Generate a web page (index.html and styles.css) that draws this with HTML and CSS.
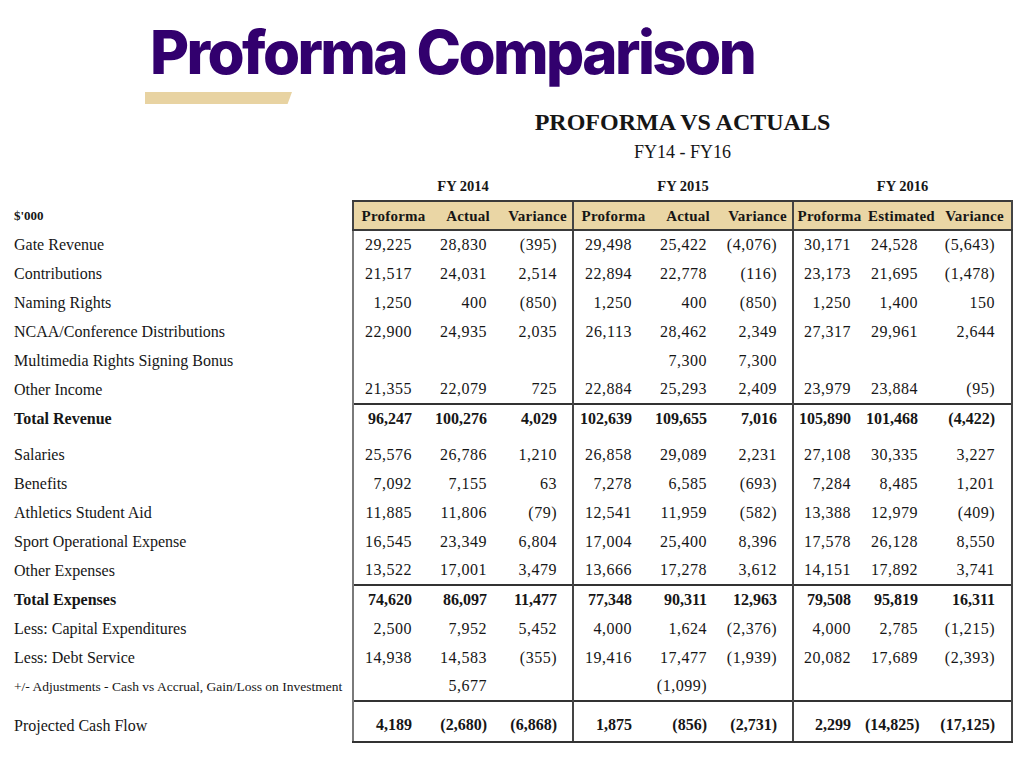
FILE: index.html
```html
<!DOCTYPE html>
<html>
<head>
<meta charset="utf-8">
<link rel="stylesheet" href="styles.css">
</head>
<body>
<header class="page-head">
  <h1 class="title">Proforma Comparison</h1>
  <div class="title-bar"></div>
</header>
<div class="report-head">
  <div class="report-title">PROFORMA VS ACTUALS</div>
  <div class="report-sub">FY14 - FY16</div>
</div>
<table class="fin">
  <colgroup>
    <col class="c-label">
    <col class="c-a"><col class="c-b"><col class="c-b">
    <col class="c-a"><col class="c-b"><col class="c-b">
    <col class="c-e"><col class="c-f"><col class="c-g">
  </colgroup>
  <tr class="years">
    <td></td>
    <td colspan="3">FY 2014</td>
    <td colspan="3">FY 2015</td>
    <td colspan="3">FY 2016</td>
  </tr>
  <tr class="hdr">
    <td class="lbl unit">$'000</td>
    <th class="g">Proforma</th><th>Actual</th><th>Variance</th>
    <th class="g">Proforma</th><th>Actual</th><th>Variance</th>
    <th class="g">Proforma</th><th>Estimated</th><th class="end">Variance</th>
  </tr>
  <tr>
    <td class="lbl">Gate Revenue</td>
    <td class="g">29,225</td><td>28,830</td><td>(395)</td>
    <td class="g">29,498</td><td>25,422</td><td>(4,076)</td>
    <td class="g">30,171</td><td>24,528</td><td class="end">(5,643)</td>
  </tr>
  <tr>
    <td class="lbl">Contributions</td>
    <td class="g">21,517</td><td>24,031</td><td>2,514</td>
    <td class="g">22,894</td><td>22,778</td><td>(116)</td>
    <td class="g">23,173</td><td>21,695</td><td class="end">(1,478)</td>
  </tr>
  <tr>
    <td class="lbl">Naming Rights</td>
    <td class="g">1,250</td><td>400</td><td>(850)</td>
    <td class="g">1,250</td><td>400</td><td>(850)</td>
    <td class="g">1,250</td><td>1,400</td><td class="end">150</td>
  </tr>
  <tr>
    <td class="lbl">NCAA/Conference Distributions</td>
    <td class="g">22,900</td><td>24,935</td><td>2,035</td>
    <td class="g">26,113</td><td>28,462</td><td>2,349</td>
    <td class="g">27,317</td><td>29,961</td><td class="end">2,644</td>
  </tr>
  <tr>
    <td class="lbl">Multimedia Rights Signing Bonus</td>
    <td class="g"></td><td></td><td></td>
    <td class="g"></td><td>7,300</td><td>7,300</td>
    <td class="g"></td><td></td><td class="end"></td>
  </tr>
  <tr>
    <td class="lbl">Other Income</td>
    <td class="g">21,355</td><td>22,079</td><td>725</td>
    <td class="g">22,884</td><td>25,293</td><td>2,409</td>
    <td class="g">23,979</td><td>23,884</td><td class="end">(95)</td>
  </tr>
  <tr class="total rule tot-rev">
    <td class="lbl">Total Revenue</td>
    <td class="g">96,247</td><td>100,276</td><td>4,029</td>
    <td class="g">102,639</td><td>109,655</td><td>7,016</td>
    <td class="g">105,890</td><td>101,468</td><td class="end">(4,422)</td>
  </tr>
  <tr>
    <td class="lbl">Salaries</td>
    <td class="g">25,576</td><td>26,786</td><td>1,210</td>
    <td class="g">26,858</td><td>29,089</td><td>2,231</td>
    <td class="g">27,108</td><td>30,335</td><td class="end">3,227</td>
  </tr>
  <tr>
    <td class="lbl">Benefits</td>
    <td class="g">7,092</td><td>7,155</td><td>63</td>
    <td class="g">7,278</td><td>6,585</td><td>(693)</td>
    <td class="g">7,284</td><td>8,485</td><td class="end">1,201</td>
  </tr>
  <tr>
    <td class="lbl">Athletics Student Aid</td>
    <td class="g">11,885</td><td>11,806</td><td>(79)</td>
    <td class="g">12,541</td><td>11,959</td><td>(582)</td>
    <td class="g">13,388</td><td>12,979</td><td class="end">(409)</td>
  </tr>
  <tr>
    <td class="lbl">Sport Operational Expense</td>
    <td class="g">16,545</td><td>23,349</td><td>6,804</td>
    <td class="g">17,004</td><td>25,400</td><td>8,396</td>
    <td class="g">17,578</td><td>26,128</td><td class="end">8,550</td>
  </tr>
  <tr>
    <td class="lbl">Other Expenses</td>
    <td class="g">13,522</td><td>17,001</td><td>3,479</td>
    <td class="g">13,666</td><td>17,278</td><td>3,612</td>
    <td class="g">14,151</td><td>17,892</td><td class="end">3,741</td>
  </tr>
  <tr class="total rule">
    <td class="lbl">Total Expenses</td>
    <td class="g">74,620</td><td>86,097</td><td>11,477</td>
    <td class="g">77,348</td><td>90,311</td><td>12,963</td>
    <td class="g">79,508</td><td>95,819</td><td class="end">16,311</td>
  </tr>
  <tr>
    <td class="lbl">Less: Capital Expenditures</td>
    <td class="g">2,500</td><td>7,952</td><td>5,452</td>
    <td class="g">4,000</td><td>1,624</td><td>(2,376)</td>
    <td class="g">4,000</td><td>2,785</td><td class="end">(1,215)</td>
  </tr>
  <tr>
    <td class="lbl">Less: Debt Service</td>
    <td class="g">14,938</td><td>14,583</td><td>(355)</td>
    <td class="g">19,416</td><td>17,477</td><td>(1,939)</td>
    <td class="g">20,082</td><td>17,689</td><td class="end">(2,393)</td>
  </tr>
  <tr>
    <td class="lbl small">+/- Adjustments - Cash vs Accrual, Gain/Loss on Investment</td>
    <td class="g"></td><td>5,677</td><td></td>
    <td class="g"></td><td>(1,099)</td><td></td>
    <td class="g"></td><td></td><td class="end"></td>
  </tr>
  <tr class="rule cash last">
    <td class="lbl">Projected Cash Flow</td>
    <td class="g">4,189</td><td>(2,680)</td><td>(6,868)</td>
    <td class="g">1,875</td><td>(856)</td><td>(2,731)</td>
    <td class="g">2,299</td><td>(14,825)</td><td class="end">(17,125)</td>
  </tr>
</table>
</body>
</html>
```

FILE: styles.css
```css
* { box-sizing: border-box; }

html, body {
  margin: 0;
  padding: 0;
  background: #ffffff;
}

body {
  width: 1020px;
  height: 759px;
  overflow: hidden;
  font-family: "Liberation Serif", "Times New Roman", serif;
  color: #161616;
}

.page-head {
  padding-top: 15px;
}

.title {
  margin: 0 0 0 150px;
  font-family: Inter, "Noto Sans", sans-serif;
  font-weight: 800;
  font-size: 60px;
  line-height: 75px;
  letter-spacing: -2.6px;
  color: #32006e;
}

.title-bar {
  margin: 2px 0 0 145px;
  width: 147px;
  height: 12px;
  background: #e8d3a2;
  clip-path: polygon(0 0, 100% 0, 97% 100%, 0 100%);
}

.report-head {
  margin-left: 353px;
  width: 659px;
  text-align: center;
  padding-top: 4px;
}

.report-title {
  font-weight: 700;
  font-size: 24px;
  line-height: 28px;
}

.report-sub {
  margin-top: 4px;
  font-size: 18px;
  line-height: 24px;
}

.fin {
  margin-top: 8px;
  width: 1012px;
  table-layout: fixed;
  border-collapse: collapse;
  font-size: 16px;
}

.c-label { width: 353px; }
.c-a { width: 80px; }
.c-b { width: 70px; }
.c-e { width: 72px; }
.c-f { width: 73px; }
.c-g { width: 74px; }

.fin td, .fin th {
  padding-top: 0;
  padding-bottom: 0;
  padding-left: 0;
  height: 29px;
  line-height: 18px;
  text-align: right;
  white-space: nowrap;
  letter-spacing: 0.5px;
}

/* right padding per column, matching the accounting alignment */
.fin td:nth-child(2), .fin td:nth-child(5) { padding-right: 21px; }
.fin td:nth-child(3), .fin td:nth-child(6) { padding-right: 16px; }
.fin td:nth-child(4), .fin td:nth-child(7) { padding-right: 15px; }
.fin td:nth-child(8) { padding-right: 14px; }
.fin td:nth-child(9) { padding-right: 20px; }
.fin td:nth-child(10) { padding-right: 16px; }

.fin td.lbl {
  text-align: left;
  padding-left: 14px;
  padding-right: 0;
  letter-spacing: 0;
}

.fin .small { font-size: 13.5px; }

.years td {
  text-align: center;
  padding: 0 !important;
  font-weight: 700;
  font-size: 14.5px;
  letter-spacing: 0;
}

.hdr th {
  background: #ead6a5;
  font-weight: 700;
  font-size: 15px;
  text-align: center;
  padding: 0;
  height: 28px;
  letter-spacing: 0.2px;
  border-top: 2px solid #3a3a3a;
  border-bottom: 2px solid #3a3a3a;
}

.hdr td.unit {
  font-weight: 700;
  font-size: 13px;
}

.fin .g { border-left: 2px solid #444; }
.fin .end { border-right: 2px solid #444; }
.fin tr:not(.years) > td.g:nth-child(2) { border-left: 2px solid #7a7a7a; }

.total td { font-weight: 700; letter-spacing: 0; }

.rule td:not(.lbl) { border-top: 2px solid #333; }

.tot-rev td {
  height: 36px;
  padding-bottom: 7px;
}

.cash td {
  height: 41px;
  vertical-align: bottom;
  padding-bottom: 7px;
}
.cash td:not(.lbl) { font-weight: 700; letter-spacing: 0; }

.last td:not(.lbl) { border-bottom: 2px solid #333; }
```
